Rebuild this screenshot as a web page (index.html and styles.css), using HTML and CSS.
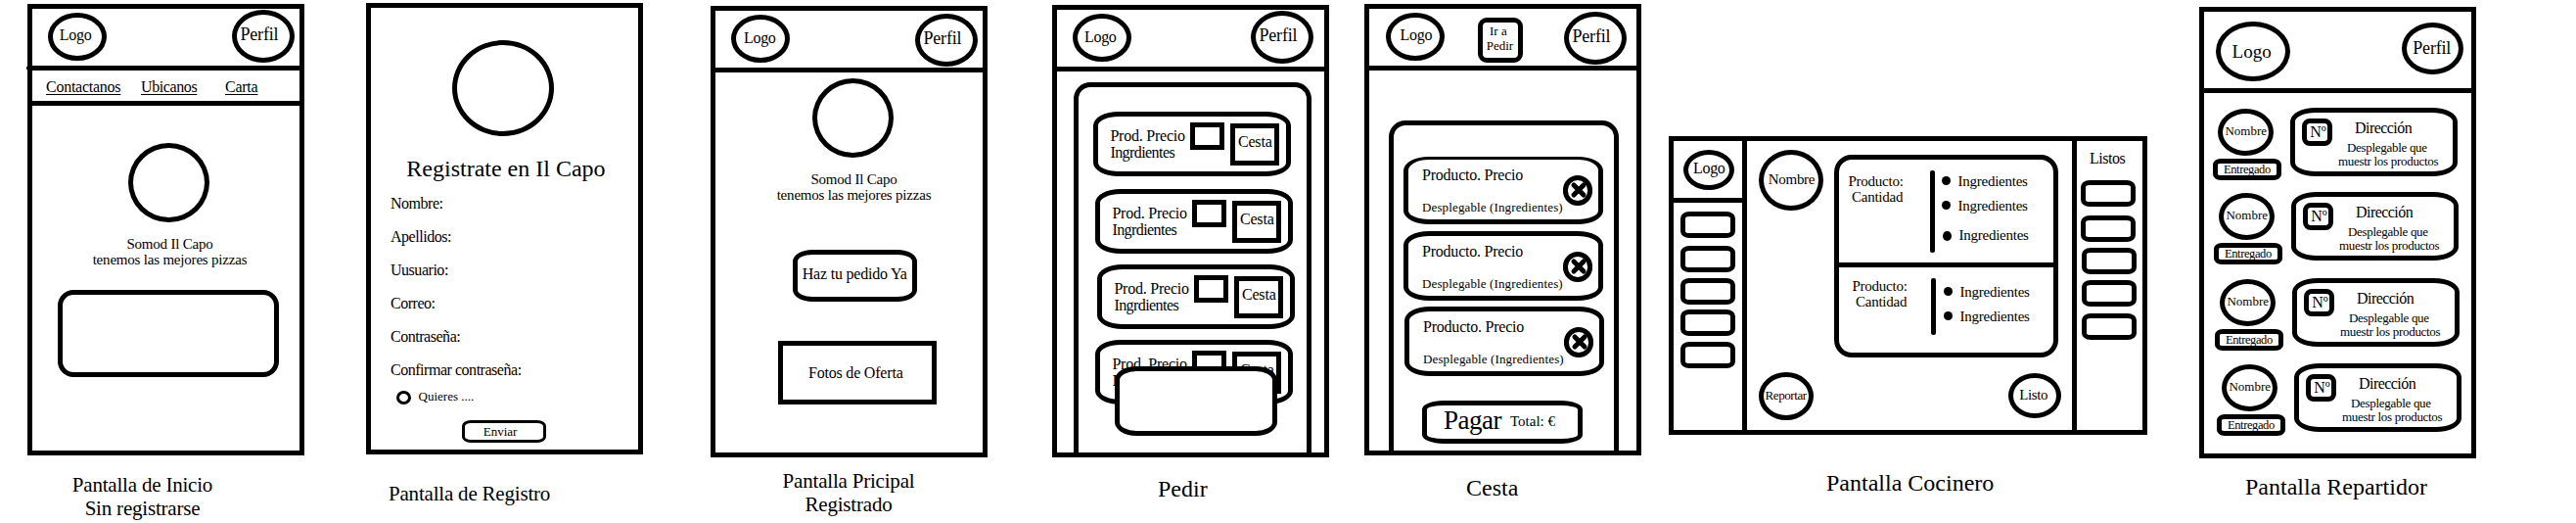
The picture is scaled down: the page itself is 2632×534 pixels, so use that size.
FILE: index.html
```html
<!DOCTYPE html>
<html lang="es">
<head>
<meta charset="utf-8">
<title>Il Capo - Pantallas</title>
<link rel="stylesheet" href="styles.css">
</head>
<body>

<section class="board inicio">
  <div class="frame">
    <header class="top">
      <div class="oval logo">Logo</div>
      <div class="oval perfil">Perfil</div>
    </header>
    <nav class="nav"><a class="n1">Contactanos</a><a class="n2">Ubicanos</a><a>Carta</a></nav>
    <div class="oval pizza"></div>
    <p class="tagline">Somod Il Capo<br>tenemos las mejores pizzas</p>
    <div class="banner"></div>
  </div>
  <h2 class="caption two">Pantalla de Inicio<br>Sin registrarse</h2>
</section>

<section class="board registro">
  <div class="frame">
    <div class="oval avatar"></div>
    <h1 class="title">Registrate en Il Capo</h1>
    <div class="fields">
      <label>Nombre:</label>
      <label>Apellidos:</label>
      <label>Uusuario:</label>
      <label>Correo:</label>
      <label>Contraseña:</label>
      <label>Confirmar contraseña:</label>
    </div>
    <div class="check"><span class="radio"></span><span>Quieres ....</span></div>
    <div class="send">Enviar</div>
  </div>
  <h2 class="caption">Pantalla de Registro</h2>
</section>

<section class="board principal">
  <div class="frame">
    <header class="top">
      <div class="oval logo">Logo</div>
      <div class="oval perfil">Perfil</div>
    </header>
    <div class="oval pizza"></div>
    <p class="tagline">Somod Il Capo<br>tenemos las mejores pizzas</p>
    <div class="order">Haz tu pedido Ya</div>
    <div class="photos">Fotos de Oferta</div>
  </div>
  <h2 class="caption two">Pantalla Pricipal<br>Registrado</h2>
</section>

<section class="board pedir">
  <div class="frame">
    <header class="top">
      <div class="oval logo">Logo</div>
      <div class="oval perfil">Perfil</div>
    </header>
    <div class="sheet">
      <article class="product p1">
        <div class="info"><div>Prod. Precio</div><div class="tight">Ingrdientes</div></div>
        <div class="qty"></div><div class="add">Cesta</div>
      </article>
      <article class="product p2">
        <div class="info"><div>Prod. Precio</div><div class="tight">Ingrdientes</div></div>
        <div class="qty"></div><div class="add">Cesta</div>
      </article>
      <article class="product p3">
        <div class="info"><div>Prod. Precio</div><div class="tight">Ingrdientes</div></div>
        <div class="qty"></div><div class="add">Cesta</div>
      </article>
      <article class="product p4">
        <div class="info"><div>Prod. Precio</div><div class="tight">Ingrdientes</div></div>
        <div class="qty"></div><div class="add">Cesta</div>
      </article>
      <div class="popup"></div>
    </div>
  </div>
  <h2 class="caption big">Pedir</h2>
</section>

<section class="board cesta">
  <div class="frame">
    <header class="top">
      <div class="oval logo">Logo</div>
      <div class="goto"><div class="g1">Ir a</div><div>Pedir</div></div>
      <div class="oval perfil">Perfil</div>
    </header>
    <div class="sheet">
      <article class="line l1">
        <div class="info"><div>Producto. Precio</div><div class="drop">Desplegable (Ingredientes)</div></div>
        <svg class="remove" viewBox="0 0 30 31"><ellipse cx="15" cy="15.5" rx="12.6" ry="13"/><path d="M11 10l10 10M21 10l-10 10"/></svg>
      </article>
      <article class="line l2">
        <div class="info"><div>Producto. Precio</div><div class="drop">Desplegable (Ingredientes)</div></div>
        <svg class="remove" viewBox="0 0 30 31"><ellipse cx="15" cy="15.5" rx="12.6" ry="13"/><path d="M11 10l10 10M21 10l-10 10"/></svg>
      </article>
      <article class="line l3">
        <div class="info"><div>Producto. Precio</div><div class="drop">Desplegable (Ingredientes)</div></div>
        <svg class="remove" viewBox="0 0 30 31"><ellipse cx="15" cy="15.5" rx="12.6" ry="13"/><path d="M11 10l10 10M21 10l-10 10"/></svg>
      </article>
      <div class="pay"><span class="pagar">Pagar</span><span class="total">Total: €</span></div>
    </div>
  </div>
  <h2 class="caption big">Cesta</h2>
</section>

<section class="board cocinero">
  <div class="frame">
    <aside class="left">
      <div class="brand"><div class="oval logo">Logo</div></div>
      <div class="slot s1"></div><div class="slot s2"></div><div class="slot s3"></div><div class="slot s4"></div><div class="slot s5"></div>
    </aside>
    <div class="people">
      <div class="oval nombre">Nombre</div>
      <div class="oval reportar">Reportar</div>
    </div>
    <main class="work">
      <div class="ticket">
        <div class="dish first">
          <div class="what"><div>Producto:</div><div class="cant">Cantidad</div></div>
          <div class="bar"></div>
          <ul class="ingr">
            <li><i></i>Ingredientes</li>
            <li><i></i>Ingredientes</li>
            <li class="last"><i></i>Ingredientes</li>
          </ul>
        </div>
        <div class="dish second">
          <div class="what"><div>Producto:</div><div class="cant">Cantidad</div></div>
          <div class="bar"></div>
          <ul class="ingr">
            <li><i></i>Ingredientes</li>
            <li><i></i>Ingredientes</li>
          </ul>
        </div>
      </div>
      <div class="oval listo">Listo</div>
    </main>
    <aside class="right">
      <div class="listos">Listos</div>
      <div class="slot r1"></div><div class="slot r2"></div><div class="slot r3"></div><div class="slot r4"></div><div class="slot r5"></div>
    </aside>
  </div>
  <h2 class="caption big">Pantalla Cocinero</h2>
</section>

<section class="board repartidor">
  <div class="frame">
    <header class="top">
      <div class="oval logo">Logo</div>
      <div class="oval perfil">Perfil</div>
    </header>
    <article class="delivery d1">
      <div class="who"><div class="oval nombre">Nombre</div><div class="done">Entregado</div></div>
      <div class="card"><div class="num">Nº</div><div class="addr"><div class="dir">Dirección</div><div class="desp">Desplegable que</div><div class="mues">muestr los productos</div></div></div>
    </article>
    <article class="delivery d2">
      <div class="who"><div class="oval nombre">Nombre</div><div class="done">Entregado</div></div>
      <div class="card"><div class="num">Nº</div><div class="addr"><div class="dir">Dirección</div><div class="desp">Desplegable que</div><div class="mues">muestr los productos</div></div></div>
    </article>
    <article class="delivery d3">
      <div class="who"><div class="oval nombre">Nombre</div><div class="done">Entregado</div></div>
      <div class="card"><div class="num">Nº</div><div class="addr"><div class="dir">Dirección</div><div class="desp">Desplegable que</div><div class="mues">muestr los productos</div></div></div>
    </article>
    <article class="delivery d4">
      <div class="who"><div class="oval nombre">Nombre</div><div class="done">Entregado</div></div>
      <div class="card"><div class="num">Nº</div><div class="addr"><div class="dir">Dirección</div><div class="desp">Desplegable que</div><div class="mues">muestr los productos</div></div></div>
    </article>
  </div>
  <h2 class="caption big">Pantalla Repartidor</h2>
</section>

</body>
</html>
```
FILE: styles.css
```css
* { box-sizing: border-box; margin: 0; padding: 0; }

body {
  display: flex;
  align-items: flex-start;
  width: 2632px;
  height: 534px;
  overflow: hidden;
  background: #fff;
  color: #000;
  font: 16px/17px "Liberation Serif", "Times New Roman", serif;
  white-space: nowrap;
}

/* Boards */
.board { flex: none; width: 283px; }
.frame { display: flow-root; border: 5px solid #000; height: 461px; }
.inicio { margin-left: 28px; padding-top: 4px; }
.registro { margin-left: 63px; padding-top: 3px; }
.principal { margin-left: 69px; padding-top: 6px; }
.pedir { margin-left: 66px; padding-top: 5px; }
.pedir .frame { height: 462px; }
.cesta { margin-left: 36px; padding-top: 4px; }
.cocinero { margin-left: 28px; padding-top: 139px; width: 489px; }
.cocinero .frame { height: 305px; display: flex; }
.repartidor { margin-left: 53px; padding-top: 7px; }

.caption { font-weight: normal; font-size: 21px; line-height: 24px; letter-spacing: -0.2px; }
.caption.two { text-align: center; }
.caption.big { font-size: 24px; line-height: 26px; letter-spacing: 0; }
.inicio .caption { margin-top: 18px; width: 235px; }
.registro .caption { margin: 28px 0 0 23px; }
.principal .caption { margin-top: 12px; width: 282px; }
.pedir .caption { margin: 19px 0 0 108px; }
.cesta .caption { margin: 20px 0 0 104px; }
.cocinero .caption { margin: 36px 0 0 161px; }
.repartidor .caption { margin: 16px 0 0 47px; }

/* Shared header */
.oval { border: 5px solid #000; border-radius: 50%; flex: none; }
.top { display: flex; align-items: flex-start; height: 63px; border-bottom: 5px solid #000; }
.logo { width: 60px; height: 49px; margin: 4px 0 0 16px; padding: 10px 0 0 8px; letter-spacing: -0.3px; }
.perfil { width: 64px; height: 54px; margin: 1px 0 0 128px; padding: 10px 0 0 3.5px; font-size: 18px; line-height: 20px; letter-spacing: -0.2px; }

/* Inicio */
.inicio .top { position: relative; }
.inicio .top::before { content: ""; position: absolute; left: -6px; top: 59px; width: 1px; height: 3px; background: #000; }
.inicio .logo { padding: 9px 0 0 6.8px; }
.nav { display: flex; height: 36px; border-bottom: 5px solid #000; padding: 8px 0 0 14px; letter-spacing: -0.25px; }
.nav a { text-decoration: underline; text-decoration-thickness: 1px; text-underline-offset: 2px; text-decoration-skip-ink: none; }
.nav .n1 { width: 97px; }
.nav .n2 { width: 86px; letter-spacing: -0.4px; }
.pizza { width: 83px; height: 81px; margin: 38px 0 0 98px; }
.tagline { margin-top: 14px; width: 281px; height: 33px; text-align: center; font-size: 15px; line-height: 16.4px; letter-spacing: -0.2px; }
.banner { width: 226px; height: 89px; margin: 22px 0 0 26px; border: 5px solid #000; border-radius: 16px; }

/* Registro */
.avatar { width: 104px; height: 98px; margin: 33px 0 0 83px; }
.title { margin: 20px 0 0 36.3px; font-size: 24px; line-height: 26px; font-weight: normal; }
.fields { display: flex; flex-direction: column; gap: 17px; margin: 14px 0 0 20px; letter-spacing: -0.47px; }
.check { display: flex; gap: 7.6px; height: 16px; margin: 11px 0 0 26px; font-size: 13px; line-height: 15px; }
.radio { width: 15px; height: 14px; margin-top: 2px; border: 3px solid #000; border-radius: 50%; }
.send { width: 86px; height: 23px; margin: 16px 0 0 93px; padding: 1px 0 0 18.7px; border: 3px solid #000; border-radius: 9px / 6px; font-size: 13px; line-height: 15px; }

/* Principal */
.principal .perfil { margin-top: 3px; }
.principal .pizza { margin: 6px 0 0 99px; }
.principal .tagline { width: 283px; }
.order { width: 127px; height: 53px; margin: 47px 0 0 79px; padding: 11px 0 0 4.7px; border: 5px solid #000; border-radius: 20px / 12px; letter-spacing: -0.2px; }
.photos { width: 162px; height: 65px; margin: 40px 0 0 64px; padding: 19px 0 0 26px; border: 5px solid #000; letter-spacing: -0.2px; }

/* Pedir */
.pedir .logo { padding-left: 7px; }
.pedir .perfil { margin-left: 122px; }
.sheet { display: flow-root; border: 5px solid #000; border-bottom: 0; border-radius: 17px 17px 0 0; }
.pedir .sheet { position: relative; width: 243px; height: 378px; margin: 11px 0 0 17px; }
.product { display: flex; align-items: flex-start; width: 202px; height: 66px; border: 5px solid #000; border-radius: 26px / 14px; }
.p1 { margin: 25px 0 0 15px; }
.p2 { margin: 13px 0 0 17px; }
.p3 { margin: 11px 0 0 19px; }
.p4 { margin: 11px 0 0 17px; }
.product .info { width: 94px; padding: 11px 0 0 12.4px; letter-spacing: -0.22px; }
.product .tight { letter-spacing: -0.57px; }
.qty { width: 35px; height: 28px; margin: 6px 6px 0 0; border: 5px solid #000; }
.add { width: 50px; height: 43px; margin-top: 7px; padding: 5px 0 0 3px; border: 5px solid #000; letter-spacing: -0.2px; }
.popup { position: absolute; left: 37px; top: 285px; width: 166px; height: 71px; border: 5px solid #000; border-radius: 22px / 14px; background: #fff; }

/* Cesta */
.cesta .logo { margin-left: 17px; padding: 9px 0 0 9.6px; }
.cesta .perfil { margin: 3px 0 0 42px; }
.goto { width: 46px; height: 46px; margin: 9px 0 0 34px; padding: 1px 0 0 3.7px; border: 5px solid #000; border-radius: 9px; font-size: 13px; line-height: 15px; }
.g1 { padding-left: 3.3px; }
.cesta .sheet { width: 235px; height: 337px; margin: 51px 0 0 20px; }
.line { display: flex; align-items: flex-start; width: 204px; height: 71px; border: 5px solid #000; border-radius: 26px / 14px; }
.l1 { height: 69px; margin: 32px 0 0 10px; border-top-width: 3px; }
.l2 { margin: 7px 0 0 10px; }
.l3 { margin: 6px 0 0 11px; }
.line .info { width: 158px; padding: 7px 0 0 14px; letter-spacing: -0.22px; }
.line .drop { margin-top: 17px; font-size: 13px; line-height: 15px; letter-spacing: 0.13px; }
.remove { width: 30px; height: 31px; margin-top: 16px; flex: none; fill: none; stroke: #000; stroke-width: 5; stroke-linecap: round; }
.pay { display: flex; width: 164px; height: 44px; margin: 25px 0 0 29px; padding-left: 17px; border: 5px solid #000; border-radius: 22px / 9px; }
.pagar { width: 68px; font-size: 27px; line-height: 30px; letter-spacing: -0.5px; }
.total { margin-top: 8px; font-size: 15px; }

/* Cocinero */
.left { width: 75px; border-right: 5px solid #000; }
.brand { display: flex; height: 63px; border-bottom: 5px solid #000; }
.brand .logo { width: 52px; height: 41px; margin: 9px 0 0 10px; padding: 5px 0 0 5px; }
.slot { width: 56px; height: 27px; margin-left: 7px; border: 5px solid #000; border-radius: 9px / 7px; }
.s1 { margin-top: 9px; }
.s2 { margin-top: 8px; }
.s3, .s5 { margin-top: 6px; }
.s4 { margin-top: 5px; }
.people { width: 89px; padding: 9px 0 0 12px; }
.people .nombre { width: 66px; height: 62px; padding: 17px 0 0 4.8px; font-size: 15px; line-height: 16px; letter-spacing: -0.3px; }
.reportar { width: 56px; height: 49px; margin-top: 165px; padding: 11px 0 0 1.5px; font-size: 13px; line-height: 15px; letter-spacing: -0.4px; }
.work { width: 243px; padding-top: 14px; }
.ticket { width: 229px; height: 207px; border: 5px solid #000; border-radius: 18px; font-size: 15px; line-height: 16px; letter-spacing: -0.25px; }
.dish { display: flex; align-items: flex-start; }
.first { height: 110px; border-bottom: 5px solid #000; }
.what { width: 93px; padding: 14px 0 0 9.5px; }
.cant { padding-left: 3.5px; }
.bar { width: 5px; height: 84px; margin-top: 11px; border-radius: 2px; background: #000; }
.ingr { list-style: none; padding: 14px 0 0 7px; }
.ingr li { display: flex; gap: 7.5px; margin-bottom: 9px; }
.ingr i { width: 9px; height: 9px; margin-top: 3px; border-radius: 50%; background: #000; }
.ingr .last { margin: 14px 0 0 1px; }
.ingr .last i { height: 10px; margin-top: 4px; }
.second .what { width: 94px; padding: 11px 0 0 13.5px; }
.second .bar { height: 58px; }
.second .ingr { padding: 17px 0 0 8px; }
.listo { width: 54px; height: 46px; margin: 16px 0 0 178px; padding: 9px 0 0 6.3px; font-size: 15px; line-height: 16px; letter-spacing: -0.4px; }
.right { width: 72px; border-left: 5px solid #000; }
.listos { margin: 9px 0 0 13px; letter-spacing: -0.5px; }
.r1, .r2 { margin: 14px 0 0 4px; }
.r2 { margin-top: 9px; }
.r3, .r4, .r5 { margin: 6px 0 0 5px; }
.r5 { margin-top: 7px; }

/* Repartidor */
.repartidor .top { height: 83px; }
.repartidor .logo { width: 76px; height: 61px; margin: 10px 0 0 12px; padding: 15px 0 0 11.6px; font-size: 19px; line-height: 21px; letter-spacing: 0; }
.repartidor .perfil { width: 63px; height: 53px; margin: 11px 0 0 114px; padding: 11px 0 0 6.3px; }
.delivery { display: flex; align-items: flex-start; height: 74px; }
.d1 { margin: 15px 0 0 9px; }
.d2 { margin: 12px 0 0 10px; }
.d3 { margin: 14px 0 0 11px; }
.d4 { margin: 13px 0 0 13px; }
.who { width: 79px; padding-top: 1px; }
.who .nombre { width: 57px; height: 48px; margin-left: 5px; padding: 10px 0 0 2.4px; font-size: 13px; line-height: 15px; }
.done { width: 70px; height: 22px; margin-top: 3px; padding-left: 6px; border: 5px solid #000; border-radius: 8px / 6px; font-size: 12.5px; line-height: 12px; letter-spacing: -0.4px; }
.card { display: flex; align-items: flex-start; width: 171px; height: 70px; border: 5px solid #000; border-radius: 26px / 14px; }
.num { width: 31px; height: 28px; margin: 6px 0 0 7px; padding-left: 3.3px; border: 5px solid #000; border-radius: 8px; }
.addr { padding: 7px 0 0 6px; font-size: 13px; line-height: 14px; letter-spacing: -0.3px; }
.dir { padding-left: 17px; margin-bottom: 5px; font-size: 16px; line-height: 17px; letter-spacing: -0.55px; }
.desp { padding-left: 9px; }
```
